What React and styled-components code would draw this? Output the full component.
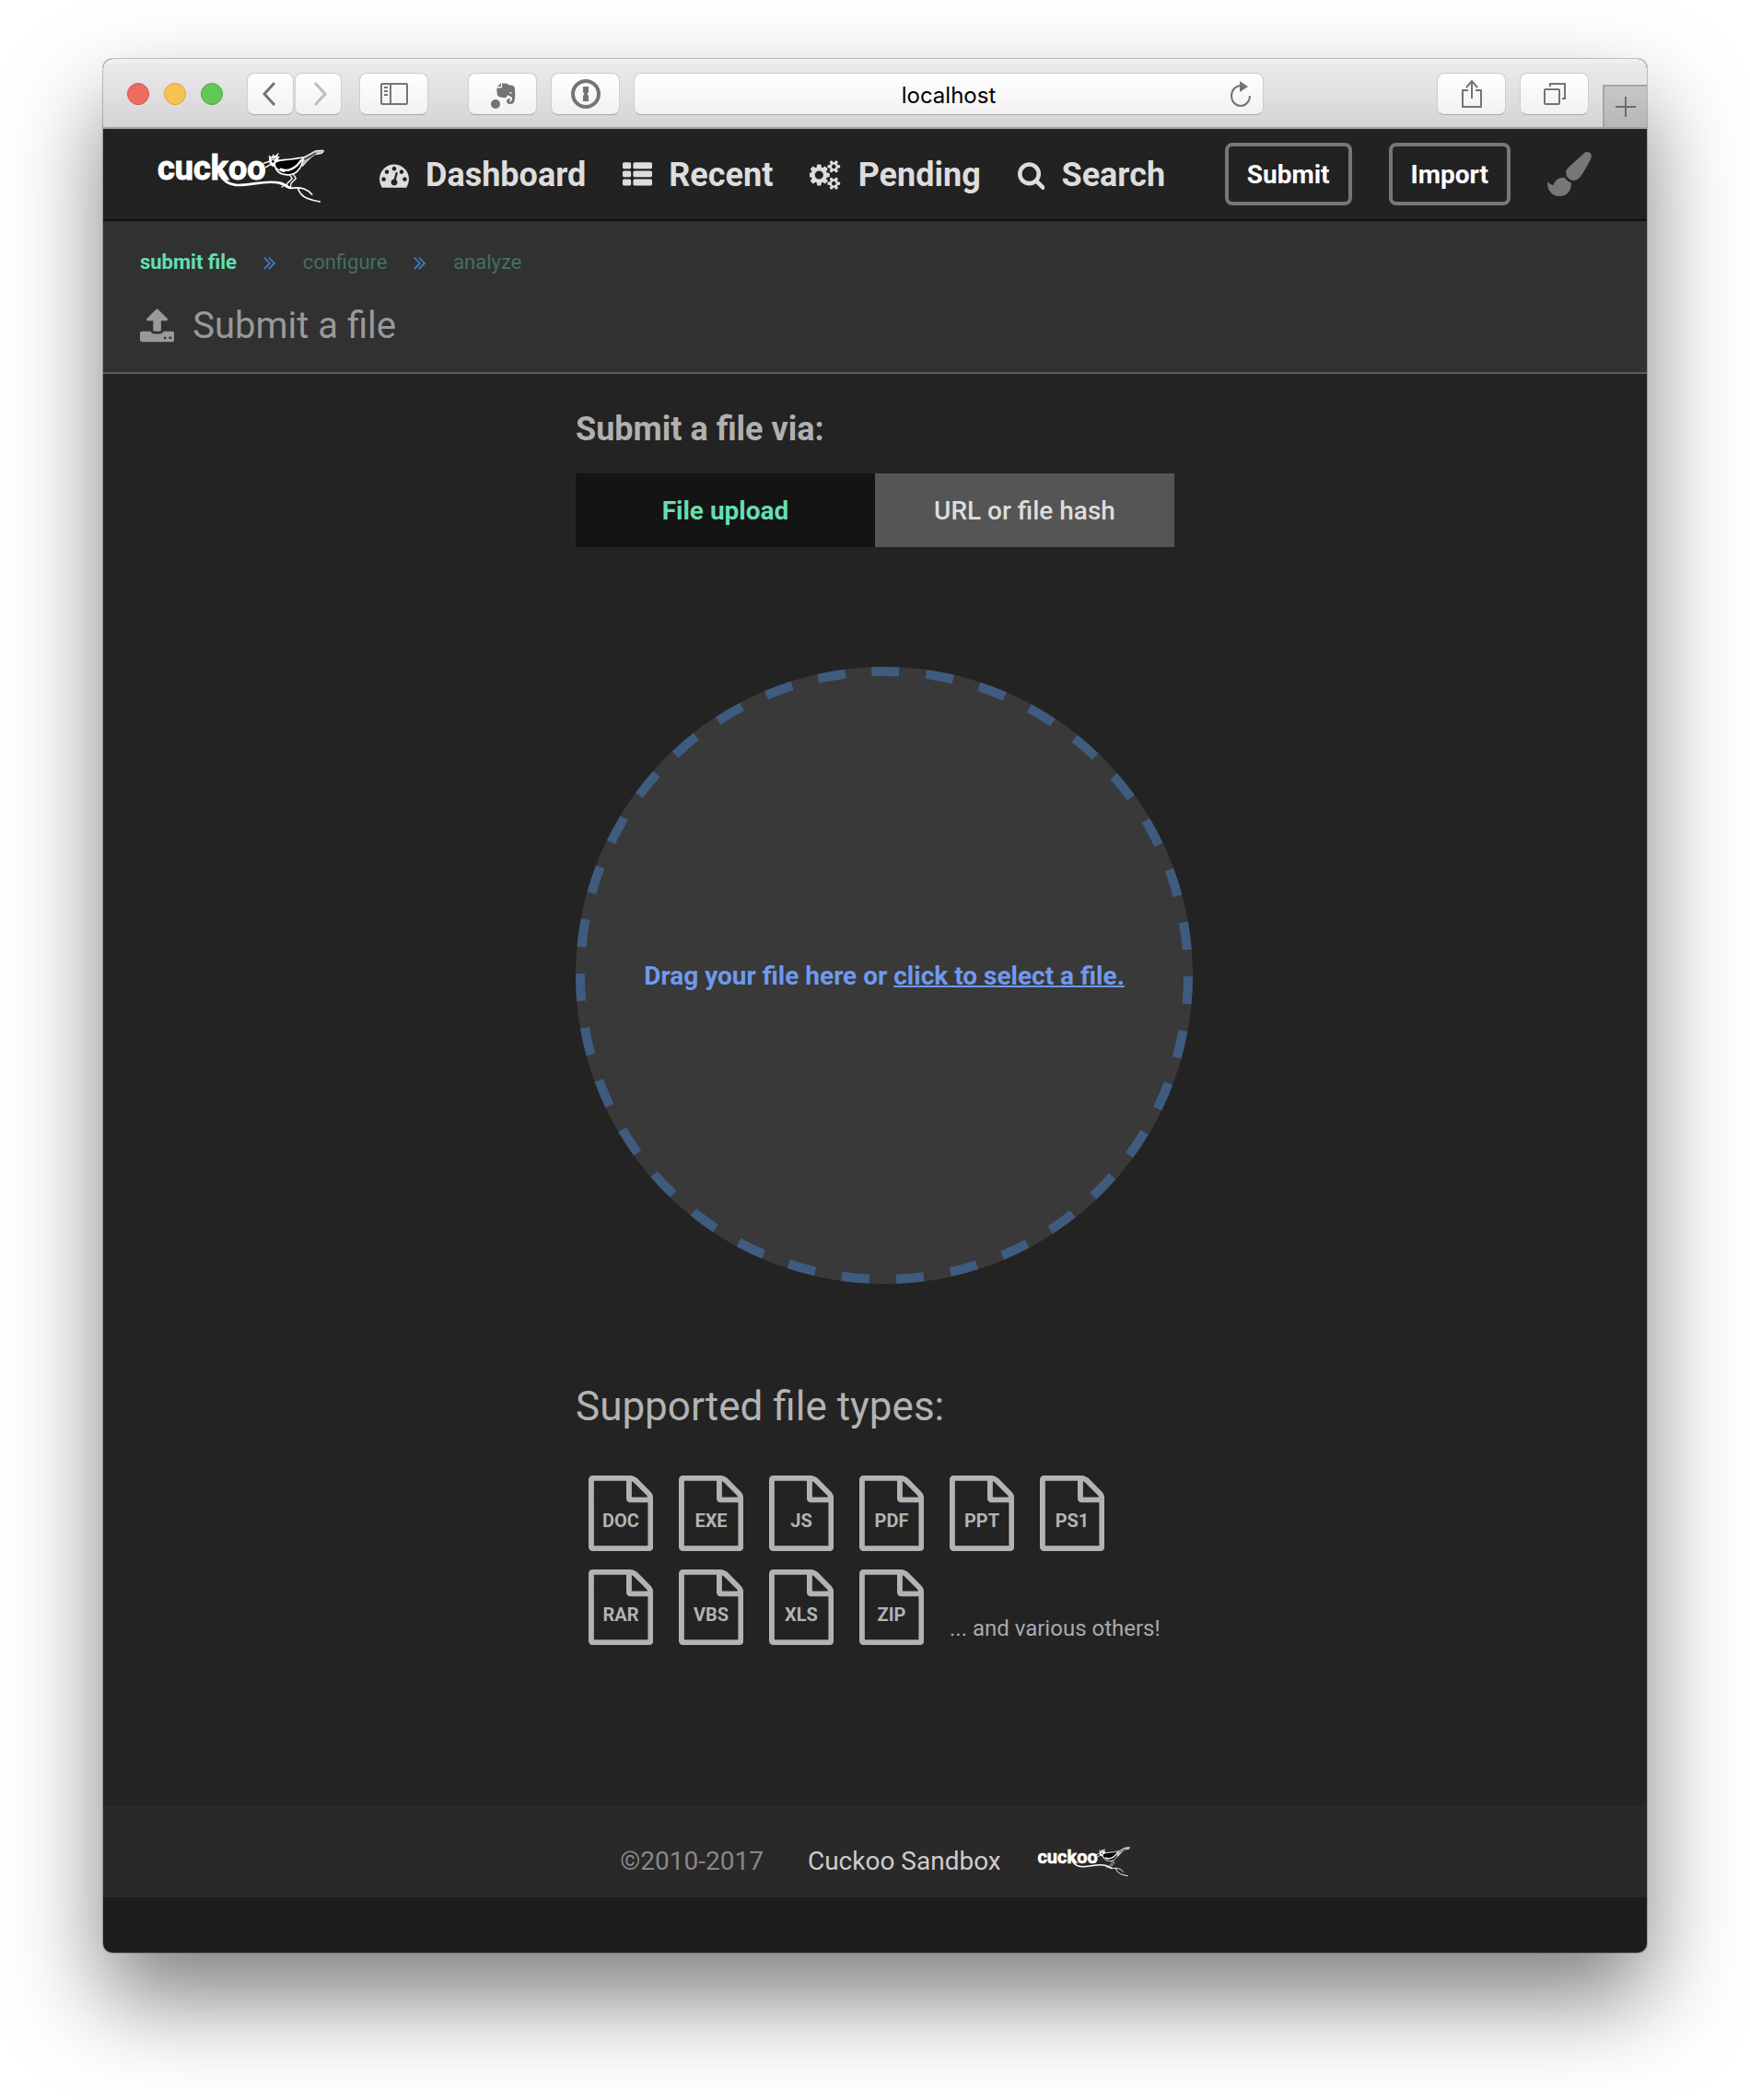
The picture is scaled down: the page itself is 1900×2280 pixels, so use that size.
import React, { useState } from "react";
import styled, { createGlobalStyle } from "styled-components";

const GlobalStyle = createGlobalStyle`
  *, *::before, *::after { box-sizing: border-box; }
  body {
    margin: 0;
    background: #fff;
    font-family: Roboto, "Liberation Sans", sans-serif;
  }
  h1, h2, p, ol, ul { margin: 0; padding: 0; list-style: none; }
  button, input { font: inherit; }
  a { color: inherit; text-decoration: none; }
`;

/* Font Awesome 4 outlines, on their 1792-unit grid */
const ICONS = {
  dashboard: {
    w: 1792,
    d: "M384 1152q0-53-37.5-90.5t-90.5-37.5-90.5 37.5-37.5 90.5 37.5 90.5 90.5 37.5 90.5-37.5 37.5-90.5zm192-448q0-53-37.5-90.5t-90.5-37.5-90.5 37.5-37.5 90.5 37.5 90.5 90.5 37.5 90.5-37.5 37.5-90.5zm428 481l101-382q6-26-7.5-48.5t-38.5-29.5-48 6.5-30 39.5l-101 382q-60 5-107 43.5t-63 98.5q-20 77 20 146t117 89 146-20 89-117q16-60-6-117t-72-91zm660-33q0-53-37.5-90.5t-90.5-37.5-90.5 37.5-37.5 90.5 37.5 90.5 90.5 37.5 90.5-37.5 37.5-90.5zm-640-640q0-53-37.5-90.5t-90.5-37.5-90.5 37.5-37.5 90.5 37.5 90.5 90.5 37.5 90.5-37.5 37.5-90.5zm448 192q0-53-37.5-90.5t-90.5-37.5-90.5 37.5-37.5 90.5 37.5 90.5 90.5 37.5 90.5-37.5 37.5-90.5zm320 448q0 261-141 483-19 29-54 29h-1402q-35 0-54-29-141-221-141-483 0-182 71-348t191-286 286-191 348-71 348 71 286 191 191 286 71 348z",
  },
  list: {
    w: 1792,
    d: "M512 1248v192q0 40-28 68t-68 28h-320q-40 0-68-28t-28-68v-192q0-40 28-68t68-28h320q40 0 68 28t28 68zm0-512v192q0 40-28 68t-68 28h-320q-40 0-68-28t-28-68v-192q0-40 28-68t68-28h320q40 0 68 28t28 68zm1280 512v192q0 40-28 68t-68 28h-960q-40 0-68-28t-28-68v-192q0-40 28-68t68-28h960q40 0 68 28t28 68zm-1280-1024v192q0 40-28 68t-68 28h-320q-40 0-68-28t-28-68v-192q0-40 28-68t68-28h320q40 0 68 28t28 68zm1280 512v192q0 40-28 68t-68 28h-960q-40 0-68-28t-28-68v-192q0-40 28-68t68-28h960q40 0 68 28t28 68zm0-512v192q0 40-28 68t-68 28h-960q-40 0-68-28t-28-68v-192q0-40 28-68t68-28h960q40 0 68 28t28 68z",
  },
  cogs: {
    w: 1920,
    d: "M832 896q0-106-75-181t-181-75-181 75-75 181 75 181 181 75 181-75 75-181zm768 512q0-52-38-90t-90-38-90 38-38 90q0 53 37.5 90.5t90.5 37.5 90.5-37.5 37.5-90.5zm0-1024q0-52-38-90t-90-38-90 38-38 90q0 53 37.5 90.5t90.5 37.5 90.5-37.5 37.5-90.5zm-384 421v185q0 10-7 19.5t-16 10.5l-155 24q-11 35-32 76 34 48 90 115 7 11 7 20 0 12-7 19-23 30-82.5 89.5t-78.5 59.5q-11 0-21-7l-115-90q-37 19-77 31-11 108-23 155-7 24-30 24h-186q-11 0-20-7.5t-10-17.5l-23-153q-34-10-75-31l-118 89q-7 7-20 7-11 0-21-8-144-133-144-160 0-9 7-19 10-14 41-53t47-61q-23-44-35-82l-152-24q-10-1-17-9.5t-7-19.5v-185q0-10 7-19.5t16-10.5l155-24q11-35 32-76-34-48-90-115-7-11-7-20 0-12 7-20 22-30 82-89t79-59q11 0 21 7l115 90q34-18 77-32 11-108 23-154 7-24 30-24h186q11 0 20 7.5t10 17.5l23 153q34 10 75 31l118-89q8-7 20-7 11 0 21 8 144 133 144 160 0 8-7 19-12 16-42 54t-45 60q23 48 34 82l152 23q10 2 17 10.5t7 19.5zm640 533v140q0 16-149 31-12 27-30 52 51 113 51 138 0 4-4 7-122 71-124 71-8 0-46-47t-52-68q-20 2-30 2t-30-2q-14 21-52 68t-46 47q-2 0-124-71-4-3-4-7 0-25 51-138-18-25-30-52-149-15-149-31v-140q0-16 149-31 13-29 30-52-51-113-51-138 0-4 4-7 4-2 35-20t59-34 30-16q8 0 46 46.5t52 67.5q20-2 30-2t30 2q51-71 92-112l6-2q4 0 124 70 4 3 4 7 0 25-51 138 17 23 30 52 149 15 149 31zm0-1024v140q0 16-149 31-12 27-30 52 51 113 51 138 0 4-4 7-122 71-124 71-8 0-46-47t-52-68q-20 2-30 2t-30-2q-14 21-52 68t-46 47q-2 0-124-71-4-3-4-7 0-25 51-138-18-25-30-52-149-15-149-31v-140q0-16 149-31 13-29 30-52-51-113-51-138 0-4 4-7 4-2 35-20t59-34 30-16q8 0 46 46.5t52 67.5q20-2 30-2t30 2q51-71 92-112l6-2q4 0 124 70 4 3 4 7 0 25-51 138 17 23 30 52 149 15 149 31z",
  },
  search: {
    x: 64,
    w: 1664,
    d: "M1216 832q0-185-131.5-316.5t-316.5-131.5-316.5 131.5-131.5 316.5 131.5 316.5 316.5 131.5 316.5-131.5 131.5-316.5zm512 832q0 52-38 90t-90 38q-54 0-90-38l-343-342q-179 124-399 124-143 0-273.5-55.5t-225-150-150-225-55.5-273.5 55.5-273.5 150-225 225-150 273.5-55.5 273.5 55.5 225 150 150 225 55.5 273.5q0 220-124 399l343 343q37 37 37 90z",
  },
  brush: {
    w: 1792,
    d: "M1615 0q70 0 122.5 46.5t52.5 116.5q0 63-45 151-332 629-465 752-97 91-218 91-126 0-216.5-92.5t-90.5-219.5q0-128 92-212l638-579q59-54 130-54zm-909 1034q39 76 106.5 130t150.5 76l1 71q4 213-129.5 347t-348.5 134q-123 0-218-46.5t-152.5-127.5-86.5-183-29-220q7 5 41 30t62 44.5 59 36.5 46 17q41 0 55-37 25-66 57.5-112.5t69.5-76 88-47.5 103-25.5 125-10.5z",
  },
  upload: {
    x: 64,
    w: 1664,
    d: "M1344 1472q0-26-19-45t-45-19-45 19-19 45 19 45 45 19 45-19 19-45zm256 0q0-26-19-45t-45-19-45 19-19 45 19 45 45 19 45-19 19-45zm128-224v320q0 40-28 68t-68 28h-1472q-40 0-68-28t-28-68v-320q0-40 28-68t68-28h427q21 56 70.5 92t110.5 36h256q61 0 110.5-36t70.5-92h427q40 0 68 28t28 68zm-325-648q-17 40-59 40h-256v448q0 26-19 45t-45 19h-256q-26 0-45-19t-19-45v-448h-256q-42 0-59-40-17-39 14-69l448-448q18-19 45-19t45 19l448 448q31 30 14 69z",
  },
  chevrons: {
    x: 384,
    w: 1024,
    d: "M979 960q0 13-10 23l-466 466q-10 10-23 10t-23-10l-50-50q-10-10-10-23t10-23l393-393-393-393q-10-10-10-23t10-23l50-50q10-10 23-10t23 10l466 466q10 10 10 23zm384 0q0 13-10 23l-466 466q-10 10-23 10t-23-10l-50-50q-10-10-10-23t10-23l393-393-393-393q-10-10-10-23t10-23l50-50q10-10 23-10t23 10l466 466q10 10 10 23z",
  },
  file: {
    x: 128,
    w: 1536,
    d: "M1596 380q28 28 48 76t20 88v1152q0 40-28 68t-68 28h-1344q-40 0-68-28t-28-68v-1600q0-40 28-68t68-28h896q40 0 88 20t76 48zm-444-244v376h376q-10-29-22-41l-313-313q-12-12-41-22zm384 1528v-1024h-416q-40 0-68-28t-28-68v-416h-768v1536h1280z",
  },
};

const Glyph = styled.svg`
  display: block;
  flex: none;
  height: ${(p) => p.$size}px;
  fill: currentColor;
`;

function Icon({ name, size }) {
  const { x = 0, w, d } = ICONS[name];
  return (
    <Glyph $size={size} viewBox={`${x} 0 ${w} 1792`} aria-hidden="true">
      <path d={d} />
    </Glyph>
  );
}

/* ---------- browser window ---------- */

const Desktop = styled.div`
  padding: 64px 112px 160px;
`;

const Window = styled.div`
  overflow: hidden;
  border-radius: 10px;
  background: #1c1c1c;
  box-shadow: 0 0 0 1px rgba(0, 0, 0, 0.22), 0 50px 100px rgba(0, 0, 0, 0.5);
`;

const Toolbar = styled.div`
  display: flex;
  align-items: center;
  height: 76px;
  padding: 2px 0 0 26px;
  border-bottom: 2px solid #a09ea1;
  background: linear-gradient(#f2f0f3, #ebe9ec 10%, #d5d3d6);
`;

const Lights = styled.div`
  display: flex;
  gap: 16px;
  margin-right: 26px;
`;

const Light = styled.button`
  width: 24px;
  height: 24px;
  padding: 0;
  border: 1px solid ${(p) => p.$edge};
  border-radius: 50%;
  background: ${(p) => p.$fill};
`;

const ToolGroup = styled.div`
  display: flex;
  gap: ${(p) => p.$gap}px;
  margin-right: ${(p) => p.$after}px;
`;

const ToolButton = styled.button`
  display: flex;
  align-items: center;
  justify-content: center;
  width: ${(p) => (p.$narrow ? 51 : 75)}px;
  height: 46px;
  padding: 0;
  border: 1px solid #cfcdd0;
  border-bottom-color: #a9a7aa;
  border-radius: 8px;
  background: linear-gradient(#fff, #f1f1f1);
  color: ${(p) => (p.$faded ? "#bdbdbd" : "#747474")};
`;

const AddressBar = styled.div`
  display: grid;
  grid-template-columns: 48px 1fr 48px;
  flex: 1;
  min-width: 200px;
  height: 46px;
  margin-right: 188px;
  border: 1px solid #cfcdd0;
  border-bottom-color: #a9a7aa;
  border-radius: 8px;
  background: linear-gradient(#fff, #f1f1f1);
`;

const Address = styled.input`
  grid-column: 2;
  min-width: 0;
  padding: 2px 0 0;
  border: 0;
  background: transparent;
  color: #000;
  font-family: Inter, "Liberation Sans", sans-serif;
  font-size: 24px;
  text-align: center;
`;

const Reload = styled.button`
  display: flex;
  align-items: center;
  justify-content: center;
  padding: 0;
  border: 0;
  background: transparent;
  color: #747474;
`;

const NewTab = styled.button`
  display: flex;
  align-items: center;
  justify-content: center;
  align-self: flex-end;
  width: 48px;
  height: 46px;
  padding: 0;
  border: 0 solid #a5a3a6;
  border-width: 2px 0 0 2px;
  background: linear-gradient(#c7c5c8, #b9b6ba);
  color: #6c6b6d;
`;

const Line = styled.svg`
  display: block;
  fill: none;
  stroke: currentColor;
  stroke-width: ${(p) => p.$weight || 2};
`;

/* ---------- site header ---------- */

const NavBar = styled.header`
  display: flex;
  align-items: center;
  height: 100px;
  padding: 0 60px;
  border-bottom: 2px solid #111;
  background: #222;
`;

const LogoLink = styled.a`
  padding-top: 4px;
`;

const LogoArt = styled.svg`
  display: block;
  width: ${(p) => p.$width}px;
  overflow: visible;
`;

const NavLinks = styled.nav`
  display: flex;
  gap: 40px;
  margin: 0 auto 0 60px;
  padding-top: 2px;
`;

const NavLink = styled.a`
  display: flex;
  align-items: center;
  gap: 18px;
  color: #ddd;
  font-size: 36px;
  font-weight: 700;
  line-height: 44px;
`;

const NavActions = styled.div`
  display: flex;
  align-items: center;
  gap: 40px;
`;

const OutlineButton = styled.button`
  height: 68px;
  padding: 0 20px;
  border: 4px solid #777;
  border-radius: 8px;
  background: transparent;
  color: #fff;
  font-size: 28px;
  font-weight: 700;
`;

const PlainButton = styled.button`
  padding: 0;
  border: 0;
  background: transparent;
  color: #777;
`;

const PageHead = styled.section`
  padding: 30px 40px 26px;
  border-bottom: 2px solid #5b5b60;
  background: #313131;
`;

const Crumbs = styled.ol`
  display: flex;
  align-items: center;
  gap: 29px;
  margin-bottom: 30px;
  font-size: 22px;
  line-height: 30px;
`;

const Crumb = styled.li`
  display: flex;
  align-items: center;
  gap: 29px;
  color: ${(p) => (p.$current ? "#64dfb0" : "#43705f")};
  font-weight: ${(p) => (p.$current ? 700 : 400)};
`;

const CrumbArrow = styled.span`
  color: #4377bd;
`;

const PageTitle = styled.h1`
  display: flex;
  align-items: center;
  gap: 20px;
  color: #999;
  font-size: 40px;
  font-weight: 400;
  line-height: 48px;
`;

/* ---------- submit form ---------- */

const Main = styled.main`
  padding: 38px 0 174px;
  background: #232323;
`;

const Column = styled.div`
  width: 650px;
  margin: 0 auto;
`;

const Prompt = styled.h2`
  margin-bottom: 26px;
  color: #b0b0b0;
  font-size: 36px;
  font-weight: 700;
  line-height: 44px;
`;

const Tabs = styled.div`
  display: grid;
  grid-template-columns: 1fr 1fr;
  margin-bottom: 130px;
`;

const Tab = styled.button`
  height: 80px;
  padding: 0;
  border: 0;
  background: ${(p) => (p.$active ? "#141414" : "#555")};
  color: ${(p) => (p.$active ? "#64dfb0" : "#ddd")};
  font-size: 28px;
  font-weight: ${(p) => (p.$active ? 700 : 500)};
`;

const DropZone = styled.label`
  display: grid;
  place-items: center;
  width: 670px;
  height: 670px;
  margin-bottom: 107px;
  border-radius: 50%;
  background: #393939;
  color: #6f99ee;
  font-size: 28px;
  font-weight: 700;
  line-height: 32px;
  cursor: pointer;

  > * { grid-area: 1 / 1; }
`;

const DashedRing = styled.svg`
  width: 100%;
  height: 100%;
  fill: none;
  stroke: #3f5b7f;
  stroke-width: 10;
`;

const FileInput = styled.input`
  width: 1px;
  height: 1px;
  opacity: 0;
`;

const DropText = styled.span`
  padding-top: 2px;
`;

const Underlined = styled.span`
  text-decoration: underline;
  text-decoration-thickness: 2px;
`;

const TypesTitle = styled.h2`
  margin-bottom: 49px;
  color: #b3b3b3;
  font-size: 44px;
  font-weight: 400;
  line-height: 52px;
`;

const TypeList = styled.ul`
  display: flex;
  flex-wrap: wrap;
  gap: 20px 28px;
  padding-left: 14px;
  color: #b3b3b3;
`;

const FileType = styled.li`
  display: grid;
  place-items: center;
  width: 70px;
  font-size: 20px;
  font-weight: 700;
  line-height: 24px;

  > * { grid-area: 1 / 1; }
`;

const TypeName = styled.span`
  padding-top: 16px;
`;

const OtherTypes = styled.li`
  align-self: flex-end;
  padding-bottom: 4px;
  color: #aaa;
  font-size: 24px;
  line-height: 28px;
`;

const Footer = styled.footer`
  display: flex;
  align-items: center;
  justify-content: center;
  gap: 40px;
  height: 100px;
  margin-bottom: 60px;
  padding-top: 22px;
  background: #2a2828;
  color: #888;
  font-size: 28px;
  line-height: 32px;
`;

const FooterCredit = styled.p`
  display: flex;
  gap: 48px;

  a { color: #ccc; }
`;

function CuckooLogo({ width }) {
  return (
    <LogoArt $width={width} viewBox="0 0 180 58" role="img" aria-label="Cuckoo">
      <text
        x="-1"
        y="33"
        fill="#fff"
        stroke="#fff"
        strokeWidth="1"
        fontFamily="Roboto, sans-serif"
        fontWeight="700"
        fontSize="36"
      >
        cuckoo
      </text>
      <g
        transform="scale(.33333) translate(324 -21)"
        fill="none"
        stroke="#fff"
        strokeLinecap="round"
        strokeLinejoin="round"
      >
        {/* branch and twigs */}
        <path strokeWidth="8" d="M-124 104C-110 128 -92 138 -64 138C-20 138 20 122 68 130Q86 134 102 146" />
        <path strokeWidth="5" d="M76 130L104 148Q132 144 150 150Q166 156 176 168" />
        <path strokeWidth="5" d="M130 148Q138 172 160 181Q180 189 202 192" />
        {/* legs */}
        <path strokeWidth="4" d="M104 106L112 116L96 132L92 144M116 104L124 116L108 132L106 148M88 138L78 144" />
        {/* tail */}
        <path fill="#bbb" strokeWidth="3" d="M140 50C156 46 172 34 186 27L212 24C216 28 214 32 206 35L186 38C172 46 160 60 146 76Z" />
        <path stroke="#222" strokeWidth="4" d="M152 54C166 48 176 40 188 34" />
        {/* body and wing */}
        <path fill="#000" strokeWidth="5" d="M54 62C66 56 84 56 104 54C122 54 134 48 148 48C146 62 142 76 134 86C124 100 108 106 90 104C72 102 60 92 56 78Z" />
        <path strokeWidth="7" d="M74 86C96 96 122 86 142 56" />
        <path strokeWidth="4" d="M60 82C66 90 74 90 86 94" />
        {/* crest, head and beak */}
        <path fill="#fff" strokeWidth="2" d="M40 68C34 58 40 50 36 42L46 48L50 38L54 45L67 34L62 46L70 46L64 54L72 58L58 64L52 78L44 74Z" />
        <path strokeWidth="4" d="M40 60L18 67M42 70L26 80" />
        <circle cx="49" cy="61" r="4" fill="#000" stroke="none" />
        <path stroke="#000" strokeWidth="2" d="M44 52L52 54L58 49" />
      </g>
    </LogoArt>
  );
}

const NAV = [
  ["dashboard", "Dashboard"],
  ["list", "Recent"],
  ["cogs", "Pending"],
  ["search", "Search"],
];

const STEPS = ["submit file", "configure", "analyze"];
const TABS = ["File upload", "URL or file hash"];
const TYPES = ["DOC", "EXE", "JS", "PDF", "PPT", "PS1", "RAR", "VBS", "XLS", "ZIP"];

/* 35 dashes round the ring; the first one is centred at the top */
const RING = 2 * Math.PI * 330;
const DASH = 30;

function BrowserToolbar() {
  return (
    <Toolbar>
      <Lights>
        <Light aria-label="Close" $fill="#ee6b60" $edge="#d4534a" />
        <Light aria-label="Minimize" $fill="#f6c351" $edge="#dca53a" />
        <Light aria-label="Zoom" $fill="#61c854" $edge="#4bab3f" />
      </Lights>
      <ToolGroup $gap={1} $after={19}>
        <ToolButton $narrow aria-label="Back">
          <Line $weight={3} width="18" height="28" viewBox="0 0 18 28"><path d="M13 2L2 14L13 26" /></Line>
        </ToolButton>
        <ToolButton $narrow $faded aria-label="Forward">
          <Line $weight={3} width="18" height="28" viewBox="0 0 18 28"><path d="M5 2L16 14L5 26" /></Line>
        </ToolButton>
      </ToolGroup>
      <ToolGroup $gap={0} $after={43}>
        <ToolButton aria-label="Sidebar">
          <Line width="30" height="28" viewBox="0 0 30 28">
            <rect x="1" y="3" width="28" height="22" rx="1" />
            <path d="M11 3V25M4 7H8M4 11H8M4 15H8" />
          </Line>
        </ToolButton>
      </ToolGroup>
      <ToolGroup $gap={15} $after={15}>
        <ToolButton aria-label="Evernote">
          <Line width="32" height="32" viewBox="0 0 32 32">
            <g fill="currentColor" stroke="none">
              <circle cx="8" cy="27" r="5" />
              <path d="M10 8L14 4V7Q14 8 13 8Z" />
              <path
                fillRule="evenodd"
                d="M15 4.500H19Q21 4.500 22 6L27 7Q29 8 29 11Q30 20 28 25Q27 27 24 27Q20 27 20 24Q20 21 24 21V23Q22 23 23 24.500Q25 25 26 22Q26.500 20 25 19Q22 18 21 17Q20 21 17 20Q11 20 10 17Q9 13 9.500 9.500H14Q15 9.500 15 8ZM23 14Q23 16 26 15.500Q26 13.500 23 14Z"
              />
            </g>
          </Line>
        </ToolButton>
        <ToolButton aria-label="1Password">
          <Line $weight={4} width="32" height="32" viewBox="0 0 32 32">
            <circle cx="16" cy="16" r="14" />
            <path fill="currentColor" stroke="none" d="M13 8H19V14L17.500 16L19 18V24H13V18L14.500 16L13 14Z" />
          </Line>
        </ToolButton>
      </ToolGroup>
      <AddressBar>
        <Address aria-label="Address" defaultValue="localhost" />
        <Reload aria-label="Reload">
          <Line width="24" height="28" viewBox="0 0 24 28">
            <path d="M12 5A10 11 0 1 0 22 16" />
            <path fill="currentColor" stroke="none" d="M11 0L20 6L11 12Z" />
          </Line>
        </Reload>
      </AddressBar>
      <ToolGroup $gap={15} $after={15}>
        <ToolButton aria-label="Share">
          <Line width="24" height="32" viewBox="0 0 24 32">
            <path d="M8 12H2V30H22V12H16M12 21V2M6 9L12 2L18 9" />
          </Line>
        </ToolButton>
        <ToolButton aria-label="Show tabs">
          <Line width="26" height="26" viewBox="0 0 26 26">
            <rect x="2" y="8" width="16" height="16" rx="1" />
            <path d="M8 5V2H24V18H21" />
          </Line>
        </ToolButton>
      </ToolGroup>
      <NewTab aria-label="New tab">
        <Line width="22" height="22" viewBox="0 0 22 22"><path d="M11 0V22M0 11H22" /></Line>
      </NewTab>
    </Toolbar>
  );
}

export default function App() {
  const [tab, setTab] = useState(TABS[0]);

  return (
    <>
      <GlobalStyle />
      <Desktop>
        <Window>
          <BrowserToolbar />

          <NavBar>
            <LogoLink href="#home"><CuckooLogo width={180} /></LogoLink>
            <NavLinks>
              {NAV.map(([icon, label]) => (
                <NavLink key={label} href={`#${label.toLowerCase()}`}>
                  <Icon name={icon} size={32} />
                  {label}
                </NavLink>
              ))}
            </NavLinks>
            <NavActions>
              <OutlineButton>Submit</OutlineButton>
              <OutlineButton>Import</OutlineButton>
              <PlainButton aria-label="Change theme"><Icon name="brush" size={48} /></PlainButton>
            </NavActions>
          </NavBar>

          <PageHead>
            <Crumbs>
              {STEPS.map((step, i) => (
                <Crumb key={step} $current={i === 0}>
                  {i > 0 && <CrumbArrow><Icon name="chevrons" size={24} /></CrumbArrow>}
                  {step}
                </Crumb>
              ))}
            </Crumbs>
            <PageTitle>
              <Icon name="upload" size={40} />
              Submit a file
            </PageTitle>
          </PageHead>

          <Main>
            <Column>
              <Prompt>Submit a file via:</Prompt>
              <Tabs role="tablist">
                {TABS.map((name) => (
                  <Tab key={name} role="tab" aria-selected={tab === name} $active={tab === name} onClick={() => setTab(name)}>
                    {name}
                  </Tab>
                ))}
              </Tabs>

              <DropZone>
                <FileInput type="file" />
                <DashedRing viewBox="0 0 670 670" aria-hidden="true">
                  <circle
                    cx="335"
                    cy="335"
                    r="330"
                    strokeDasharray={`${DASH} ${RING / 35 - DASH}`}
                    transform="rotate(-92.4 335 335)"
                  />
                </DashedRing>
                <DropText>Drag your file here or <Underlined>click to select a file.</Underlined></DropText>
              </DropZone>

              <TypesTitle>Supported file types:</TypesTitle>
              <TypeList>
                {TYPES.map((type) => (
                  <FileType key={type}>
                    <Icon name="file" size={82} />
                    <TypeName>{type}</TypeName>
                  </FileType>
                ))}
                <OtherTypes>... and various others!</OtherTypes>
              </TypeList>
            </Column>
          </Main>

          <Footer>
            <FooterCredit>
              <span>©2010-2017</span>
              <a href="#cuckoo">Cuckoo Sandbox</a>
            </FooterCredit>
            <CuckooLogo width={100} />
          </Footer>
        </Window>
      </Desktop>
    </>
  );
}
